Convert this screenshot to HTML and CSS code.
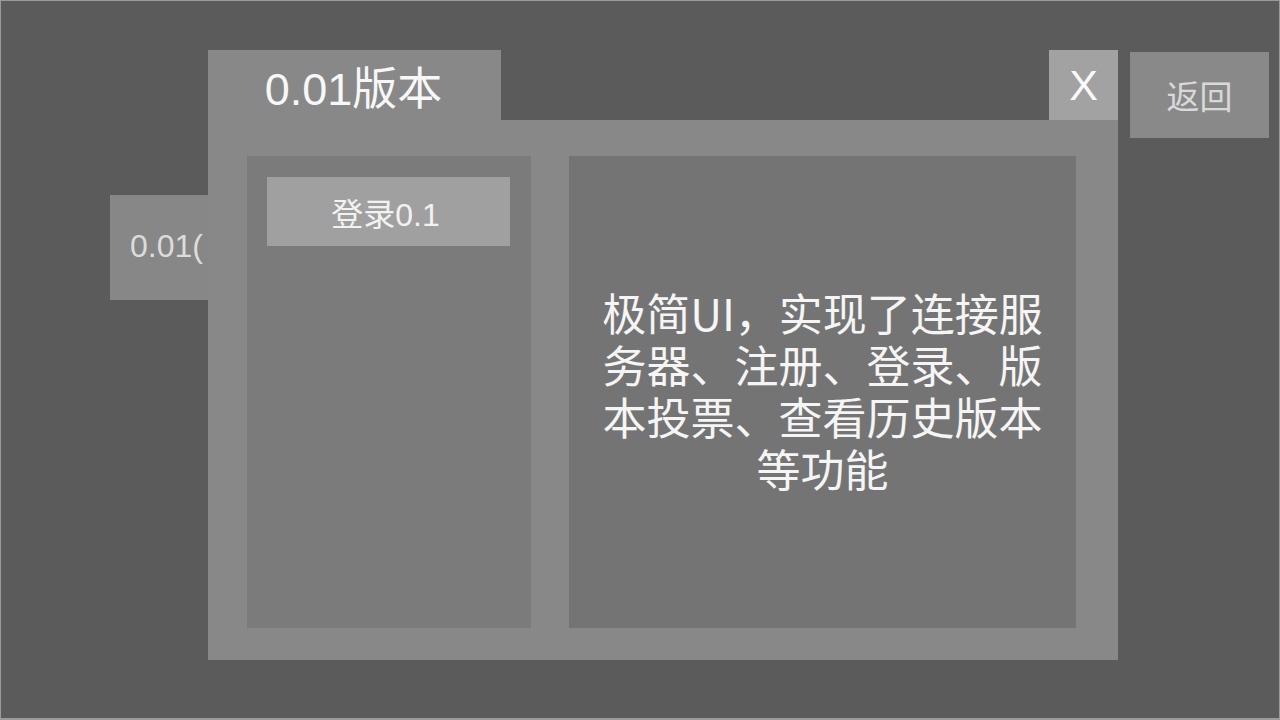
FILE: index.html
```html
<!DOCTYPE html>
<html lang="zh-CN">
<head>
<meta charset="utf-8">
<title>0.01版本</title>
<link rel="stylesheet" href="styles.css">
</head>
<body>
<div class="screen">
  <div class="side-tab"><span class="side-tab-text">0.01(</span></div>

  <div class="window">
    <div class="window-head">
      <div class="tab">0.01版本</div>
      <div class="close">X</div>
    </div>
    <div class="window-body">
      <div class="list-panel">
        <div class="list-btn">登录0.1</div>
      </div>
      <div class="desc-panel">
        <p class="desc">极简UI，实现了连接服务器、注册、登录、版本投票、查看历史版本等功能</p>
      </div>
    </div>
  </div>

  <div class="back-btn">返回</div>
</div>
</body>
</html>
```

FILE: styles.css
```css
* { box-sizing: border-box; }

html, body {
  margin: 0;
  padding: 0;
  width: 1280px;
  height: 720px;
  overflow: hidden;
  background: #5b5b5b;
}

.screen {
  position: relative;
  width: 1280px;
  height: 720px;
  background: #5b5b5b;
  border: 1px solid #9a9a9a;
  border-bottom-width: 2px;
  font-family: "Liberation Sans", "Noto Sans CJK SC", sans-serif;
  color: #f2f2f2;
}

.side-tab {
  position: absolute;
  left: 109px;
  top: 194px;
  width: 140px;
  height: 105px;
  background: #878787;
  display: flex;
  align-items: center;
  padding-left: 20px;
  overflow: hidden;
  white-space: nowrap;
}

.side-tab-text {
  font-size: 32px;
  color: #dcdcdc;
  padding-bottom: 2px;
}

.window {
  position: absolute;
  left: 207px;
  top: 49px;
  width: 910px;
  display: flex;
  flex-direction: column;
  z-index: 1;
}

.window-head {
  display: flex;
  justify-content: space-between;
  height: 70px;
}

.tab {
  width: 293px;
  height: 70px;
  background: #888888;
  font-size: 45px;
  color: #f7f7f7;
  display: flex;
  align-items: center;
  justify-content: center;
  padding-top: 0;
  padding-right: 2px;
}

.close {
  width: 69px;
  height: 70px;
  background: #a2a2a2;
  font-size: 43px;
  color: #fafafa;
  display: flex;
  align-items: center;
  justify-content: center;
  padding-top: 0;
}

.window-body {
  height: 540px;
  background: #888888;
  display: flex;
  gap: 38px;
  padding: 36px 42px 32px 39px;
}

.list-panel {
  width: 284px;
  background: #7b7b7b;
  padding: 21px 21px 0 20px;
}

.list-btn {
  height: 69px;
  background: #a0a0a0;
  font-size: 32px;
  color: #f2f2f2;
  display: flex;
  align-items: center;
  justify-content: center;
  padding-top: 0;
  padding-right: 6px;
}

.desc-panel {
  flex: 1;
  background: #747474;
  display: flex;
  align-items: center;
  justify-content: center;
  padding: 0 30px 4px;
}

.desc {
  margin: 0;
  font-size: 44px;
  line-height: 52px;
  text-align: center;
  color: #f5f5f5;
  font-family: "Noto Sans CJK SC", sans-serif;
}

.back-btn {
  position: absolute;
  left: 1129px;
  top: 51px;
  width: 139px;
  height: 86px;
  background: #898989;
  font-size: 33px;
  color: #d9d9d9;
  display: flex;
  align-items: center;
  justify-content: center;
  padding-top: 0;
}
```
